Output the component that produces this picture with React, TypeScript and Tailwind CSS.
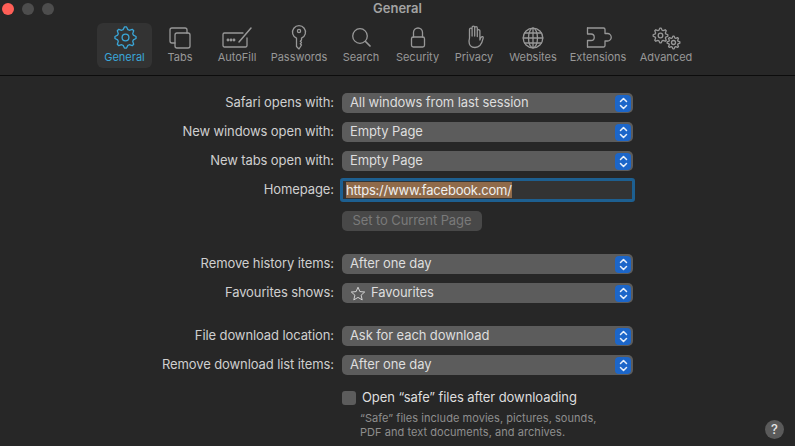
import React from "react";

const Ico = ({ children, w = 34, h = 30 }: { children: React.ReactNode; w?: number; h?: number }) => (
  <svg width={w} height={h} viewBox="0 0 34 30" fill="none" stroke="currentColor" strokeWidth="1.3" strokeLinecap="round" strokeLinejoin="round">
    {children}
  </svg>
);

const gearPath = (cx: number, cy: number, R: number, r: number, teeth: number) => {
  const pts: string[] = [];
  const n = teeth * 4;
  for (let i = 0; i < n; i++) {
    const a = (i / n) * Math.PI * 2 - Math.PI / 2 - Math.PI / n;
    const rad = i % 4 === 0 || i % 4 === 1 ? R : r;
    pts.push(`${(cx + rad * Math.cos(a)).toFixed(2)} ${(cy + rad * Math.sin(a)).toFixed(2)}`);
  }
  return "M" + pts.join("L") + "Z";
};

const icons: Record<string, React.ReactNode> = {
  General: (
    <Ico>
      <path d={gearPath(17.5, 15.5, 10.6, 8.2, 8)} />
      <circle cx="17.500" cy="15.500" r="3.400" />
    </Ico>
  ),
  Tabs: (
    <Ico>
      <path d="M12 21H9a2 2 0 0 1-2-2V8a2 2 0 0 1 2-2h13a2 2 0 0 1 2 2v3" />
      <rect x="12" y="11" width="15" height="15" rx="2" />
    </Ico>
  ),
  AutoFill: (
    <Ico>
      <path d="M23 11H4.500A1.500 1.500 0 0 0 3 12.500v11A1.500 1.500 0 0 0 4.500 25h21a1.500 1.500 0 0 0 1.500-1.500V16" />
      <path d="M19 20 31 6" strokeWidth="1.500" />
      <circle cx="8" cy="18" r="0.800" fill="currentColor" />
      <circle cx="11" cy="18" r="0.800" fill="currentColor" />
      <circle cx="14" cy="18" r="0.800" fill="currentColor" />
    </Ico>
  ),
  Passwords: (
    <Ico>
      <path d="M14.500 16.200a6.500 6.500 0 1 1 5 0V18l-1.200 1.200 1.200 1.300-1.200 1.200 1.200 1.300L17 27l-2.500-2.500z" />
      <circle cx="17" cy="9" r="1.600" />
    </Ico>
  ),
  Search: (
    <Ico>
      <circle cx="16" cy="14" r="7.300" />
      <path d="M21.500 19.500 26 24" strokeWidth="1.700" />
    </Ico>
  ),
  Security: (
    <Ico>
      <path d="M12.500 15V10.500a4.500 4.500 0 0 1 9 0V15" />
      <rect x="10.500" y="15" width="13" height="10" rx="1.800" />
    </Ico>
  ),
  Privacy: (
    <Ico>
      <path d="M12.500 16V7.500a1.300 1.300 0 0 1 2.600 0V14M15.100 14V5.500a1.300 1.300 0 0 1 2.600 0V14M17.700 14V6a1.300 1.300 0 0 1 2.600 0v8.500M20.300 14.500V9a1.300 1.300 0 0 1 2.600 0v9c0 0 .5-2 1.500-3 .8-.8 2-.3 1.800.8C25.500 19 24.500 25.500 18 25.500c-4 0-6-2-6-6.500l.5-3" />
    </Ico>
  ),
  Websites: (
    <Ico>
      <circle cx="17" cy="16" r="9.800" />
      <ellipse cx="17" cy="16" rx="4.500" ry="9.800" />
      <path d="M17 6.200v19.600M7.200 16h19.600M8.500 11h17M8.500 21h17" />
    </Ico>
  ),
  Extensions: (
    <Ico>
      <path d="M6.500 6H22.500A1.500 1.500 0 0 1 24 7.500V11.500h2.500a3.500 3.500 0 0 1 0 7.500H24v4.500A1.500 1.500 0 0 1 22.500 25H6.500" />
      <path d="M6.500 6V12h3.500a3 3 0 0 1 0 6.500H6.500V25" />
    </Ico>
  ),
  Advanced: (
    <Ico>
      <path d={gearPath(11.5, 13.5, 7.4, 5.5, 8)} />
      <circle cx="11.500" cy="13.500" r="2.300" />
      <path d={gearPath(24.5, 20.5, 6.4, 4.7, 8)} />
      <circle cx="24.500" cy="20.500" r="2" />
    </Ico>
  ),
};

const tabs: [string, string][] = [
  ["General", "w-[55px]"],
  ["Tabs", "w-[56px]"],
  ["AutoFill", "w-[58px]"],
  ["Passwords", "w-[66px]"],
  ["Search", "w-[58px]"],
  ["Security", "w-[55px]"],
  ["Privacy", "w-[58px]"],
  ["Websites", "w-[60px]"],
  ["Extensions", "w-[70px]"],
  ["Advanced", "w-[66px]"],
];

const Stepper = () => (
  <span className="flex h-[17px] w-[16px] items-center justify-center rounded-[4px] bg-[#1c66c9]">
    <svg width="9" height="13" viewBox="0 0 9 13" fill="none" stroke="#e8f0fa" strokeWidth="1.500" strokeLinecap="round" strokeLinejoin="round">
      <path d="M1.500 4.500 4.500 1.500 7.500 4.500M1.500 8.500 4.500 11.500 7.500 8.500" />
    </svg>
  </span>
);

const Label = ({ children }: { children: React.ReactNode }) => (
  <div className="w-[334px] shrink-0 whitespace-nowrap text-right text-[13px] tracking-[-0.1px] text-[#cfcfcf]">{children}</div>
);

const Select = ({ label, value, star }: { label: string; value: string; star?: boolean }) => (
  <div className="flex h-5 items-center gap-2">
    <Label>{label}</Label>
    <div className="flex h-5 w-[291px] items-center justify-between rounded-[5px] bg-[#5c5c5c] pl-2 pr-[2px] text-[13px] tracking-[-0.1px] text-[#dedede]">
      <span className="flex items-center gap-[5px]">
        {star && (
          <svg width="16" height="15" viewBox="0 0 16 15" fill="none" stroke="#dedede" strokeWidth="0.900" strokeLinejoin="round">
            <path d="M8 1.200 9.900 5.600 14.700 6 11.100 9.200 12.200 13.900 8 11.400 3.800 13.900 4.900 9.200 1.300 6 6.100 5.600Z" />
          </svg>
        )}
        {value}
      </span>
      <Stepper />
    </div>
  </div>
);

export default function App() {
  return (
    <div className="relative h-[446px] w-[795px] overflow-hidden bg-[#272727] font-['Inter','Liberation_Sans',sans-serif]">
      <header className="relative h-[76px] border-b border-[#0c0c0c] bg-[#272727]">
        <div className="absolute left-[2px] top-[3px] flex gap-[8px]">
          <span className="h-3 w-3 rounded-full bg-[#ff5f57]" />
          <span className="h-3 w-3 rounded-full bg-[#4d4d4d]" />
          <span className="h-3 w-3 rounded-full bg-[#4d4d4d]" />
        </div>
        <div className="text-center text-[13px] font-semibold leading-[16px] text-[#a3a3a3]">General</div>
        <nav className="mt-[7px] flex pl-[97px]">
          {tabs.map(([name, w]) => (
            <div
              key={name}
              className={`flex h-[45px] flex-col items-center rounded-[6px] ${w} ${name === "General" ? "bg-[#333333] text-[#3aa6d8]" : "text-[#989898]"}`}
            >
              <div className="-mt-[1px] h-[29px] w-[34px] shrink-0">{icons[name]}</div>
              <div className="whitespace-nowrap text-[11px] leading-[13px]">{name}</div>
            </div>
          ))}
        </nav>
      </header>

      <main className="flex flex-col pt-[17px]">
        <div className="flex flex-col gap-[9px]">
          <Select label="Safari opens with:" value="All windows from last session" />
          <Select label="New windows open with:" value="Empty Page" />
          <Select label="New tabs open with:" value="Empty Page" />
        </div>
        <div className="mt-[7px] flex h-[24px] items-center gap-[6px]">
          <Label>Homepage:</Label>
          <div className="flex h-[24px] w-[295px] items-center border-[3px] rounded-[3px] border-[#1d5f90] bg-[#333333] pl-[3px] text-[13px] tracking-[-0.22px] text-[#f0f0f0]">
            <span className="bg-[#8f6a4a] leading-[16px]">https://www.facebook.com/</span>
          </div>
        </div>
        <div className="mt-[9px] flex h-5 items-center gap-2">
          <div className="w-[334px]" />
          <div className="flex h-5 w-[140px] items-center justify-center rounded-[5px] bg-[#484848] text-[13px] tracking-[-0.1px] text-[#7a7a7a]">Set to Current Page</div>
        </div>
        <div className="mt-[23px] flex flex-col gap-[9px]">
          <Select label="Remove history items:" value="After one day" />
          <Select label="Favourites shows:" value="Favourites" star />
        </div>
        <div className="mt-[23px] flex flex-col gap-[9px]">
          <Select label="File download location:" value="Ask for each download" />
          <Select label="Remove download list items:" value="After one day" />
        </div>
        <div className="mt-[13px] flex items-center gap-2">
          <div className="w-[334px]" />
          <span className="h-[14px] w-[14px] rounded-[3px] bg-[#5c5c5c]" />
          <span className="ml-[-2px] text-[13px] tracking-[-0.08px] text-[#dedede]">Open “safe” files after downloading</span>
        </div>
        <div className="ml-[360px] mt-[3px] text-[11px] leading-[14px] tracking-[0.05px] text-[#8e8e8e]">
          <div>“Safe” files include movies, pictures, sounds,</div>
          <div>PDF and text documents, and archives.</div>
        </div>
      </main>

      <div className="absolute left-[765px] top-[420px] flex h-[19px] w-[19px] items-center justify-center rounded-full bg-[#5a5a5a] text-[13px] font-medium text-[#e4e4e4]">?</div>
    </div>
  );
}
